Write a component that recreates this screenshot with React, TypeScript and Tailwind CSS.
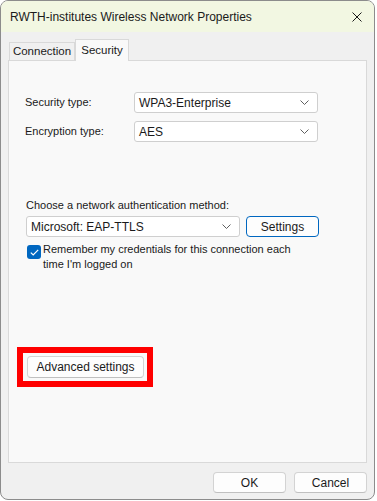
import React from 'react';

const font = { fontFamily: '"Liberation Sans", Arial, sans-serif' };

function Chevron() {
  return (
    <svg width="9" height="5" viewBox="0 0 9 5" className="text-[#5f5f5f]">
      <path d="M0.5 0.5 L4.5 4.5 L8.5 0.5" fill="none" stroke="currentColor" strokeWidth="1" />
    </svg>
  );
}

function Combo({ value, className }: { value: string; className: string }) {
  return (
    <div
      className={`flex items-center justify-between h-[21px] bg-white border border-[#cfcfcf] rounded-[3px] pl-[4px] pr-[8px] text-[12px] text-[#1a1a1a] ${className}`}
    >
      <span>{value}</span>
      <Chevron />
    </div>
  );
}

function Button({ label, className, primary }: { label: string; className: string; primary?: boolean }) {
  const edge = primary ? 'border-[#0067c0]' : 'border-[#d3d3d3] border-b-[#c0c0c0]';
  return (
    <button
      className={`h-[21px] bg-[#fdfdfd] border ${edge} rounded-[4px] text-[12px] text-[#1a1a1a] ${className}`}
    >
      {label}
    </button>
  );
}

export default function App() {
  return (
    <div className="w-[377px] h-[501px] bg-white" style={font}>
      <div className="w-[375px] h-[500px] bg-[#f0f0f0] border border-[#8c8c8c] rounded-[8px] overflow-hidden flex flex-col">
        {/* title bar */}
        <div className="h-[31px] shrink-0 bg-[#f2f7e2] flex items-center justify-between pl-[9px] pr-[12px]">
          <span className="text-[12px] text-[#1a1a1a]">RWTH-institutes Wireless Network Properties</span>
          <svg width="10" height="10" viewBox="0 0 10 10">
            <path d="M0.5 0.5 L9.5 9.5 M9.5 0.5 L0.5 9.5" stroke="#1a1a1a" strokeWidth="1" />
          </svg>
        </div>

        {/* tabs */}
        <div className="px-[7px] pt-[7px] flex-1 flex flex-col">
          <div className="flex items-end h-[21px] pl-[1px] relative z-10">
            <div className="h-[18px] w-[66px] justify-center flex items-center border border-b-0 border-[#d9d9d9] bg-[#f0f0f0] text-[11.5px] text-[#1a1a1a]">
              Connection
            </div>
            <div className="h-[22px] w-[54px] -mb-px justify-center flex items-center border border-b-0 border-[#d9d9d9] bg-[#f9f9f9] text-[11.5px] text-[#1a1a1a]">
              Security
            </div>
          </div>
          <div className="h-[403px] bg-[#f9f9f9] border border-[#d9d9d9] pl-[16px] pt-[31px] text-[11px] text-[#1a1a1a]">
            <div className="flex items-center">
              <span className="w-[109px]">Security type:</span>
              <Combo value="WPA3-Enterprise" className="w-[184px]" />
            </div>
            <div className="flex items-center mt-[8px]">
              <span className="w-[109px]">Encryption type:</span>
              <Combo value="AES" className="w-[184px]" />
            </div>

            <div className="mt-[56px] leading-[15px] pl-[1px]">Choose a network authentication method:</div>
            <div className="flex items-center mt-[3px] pl-[1px]">
              <Combo value="Microsoft: EAP-TTLS" className="w-[214px]" />
              <Button label="Settings" primary className="w-[73px] ml-[6px]" />
            </div>
            <div className="flex mt-[5px] pl-[2px]">
              <div className="w-[14px] h-[14px] mt-[3px] bg-[#0067c0] rounded-[3px] flex items-center justify-center shrink-0">
                <svg width="9" height="7" viewBox="0 0 9 7">
                  <path d="M0.8 3.6 L3.2 6 L8.2 0.8" fill="none" stroke="white" strokeWidth="1.2" />
                </svg>
              </div>
              <span className="ml-[2px] leading-[15px] whitespace-nowrap">
                Remember my credentials for this connection each
                <br />
                time I'm logged on
              </span>
            </div>

            <div className="mt-[75px] -ml-[8px] w-[136px] h-[40px] border-[6px] border-[#ff0000] flex items-center pl-[4px]">
              <Button label="Advanced settings" className="w-[117px] h-[22px]" />
            </div>
          </div>

          {/* footer */}
          <div className="flex justify-end gap-[8px] pt-[9px] pr-0">
            <Button label="OK" className="w-[73px]" />
            <Button label="Cancel" className="w-[73px]" />
          </div>
        </div>
      </div>
    </div>
  );
}
